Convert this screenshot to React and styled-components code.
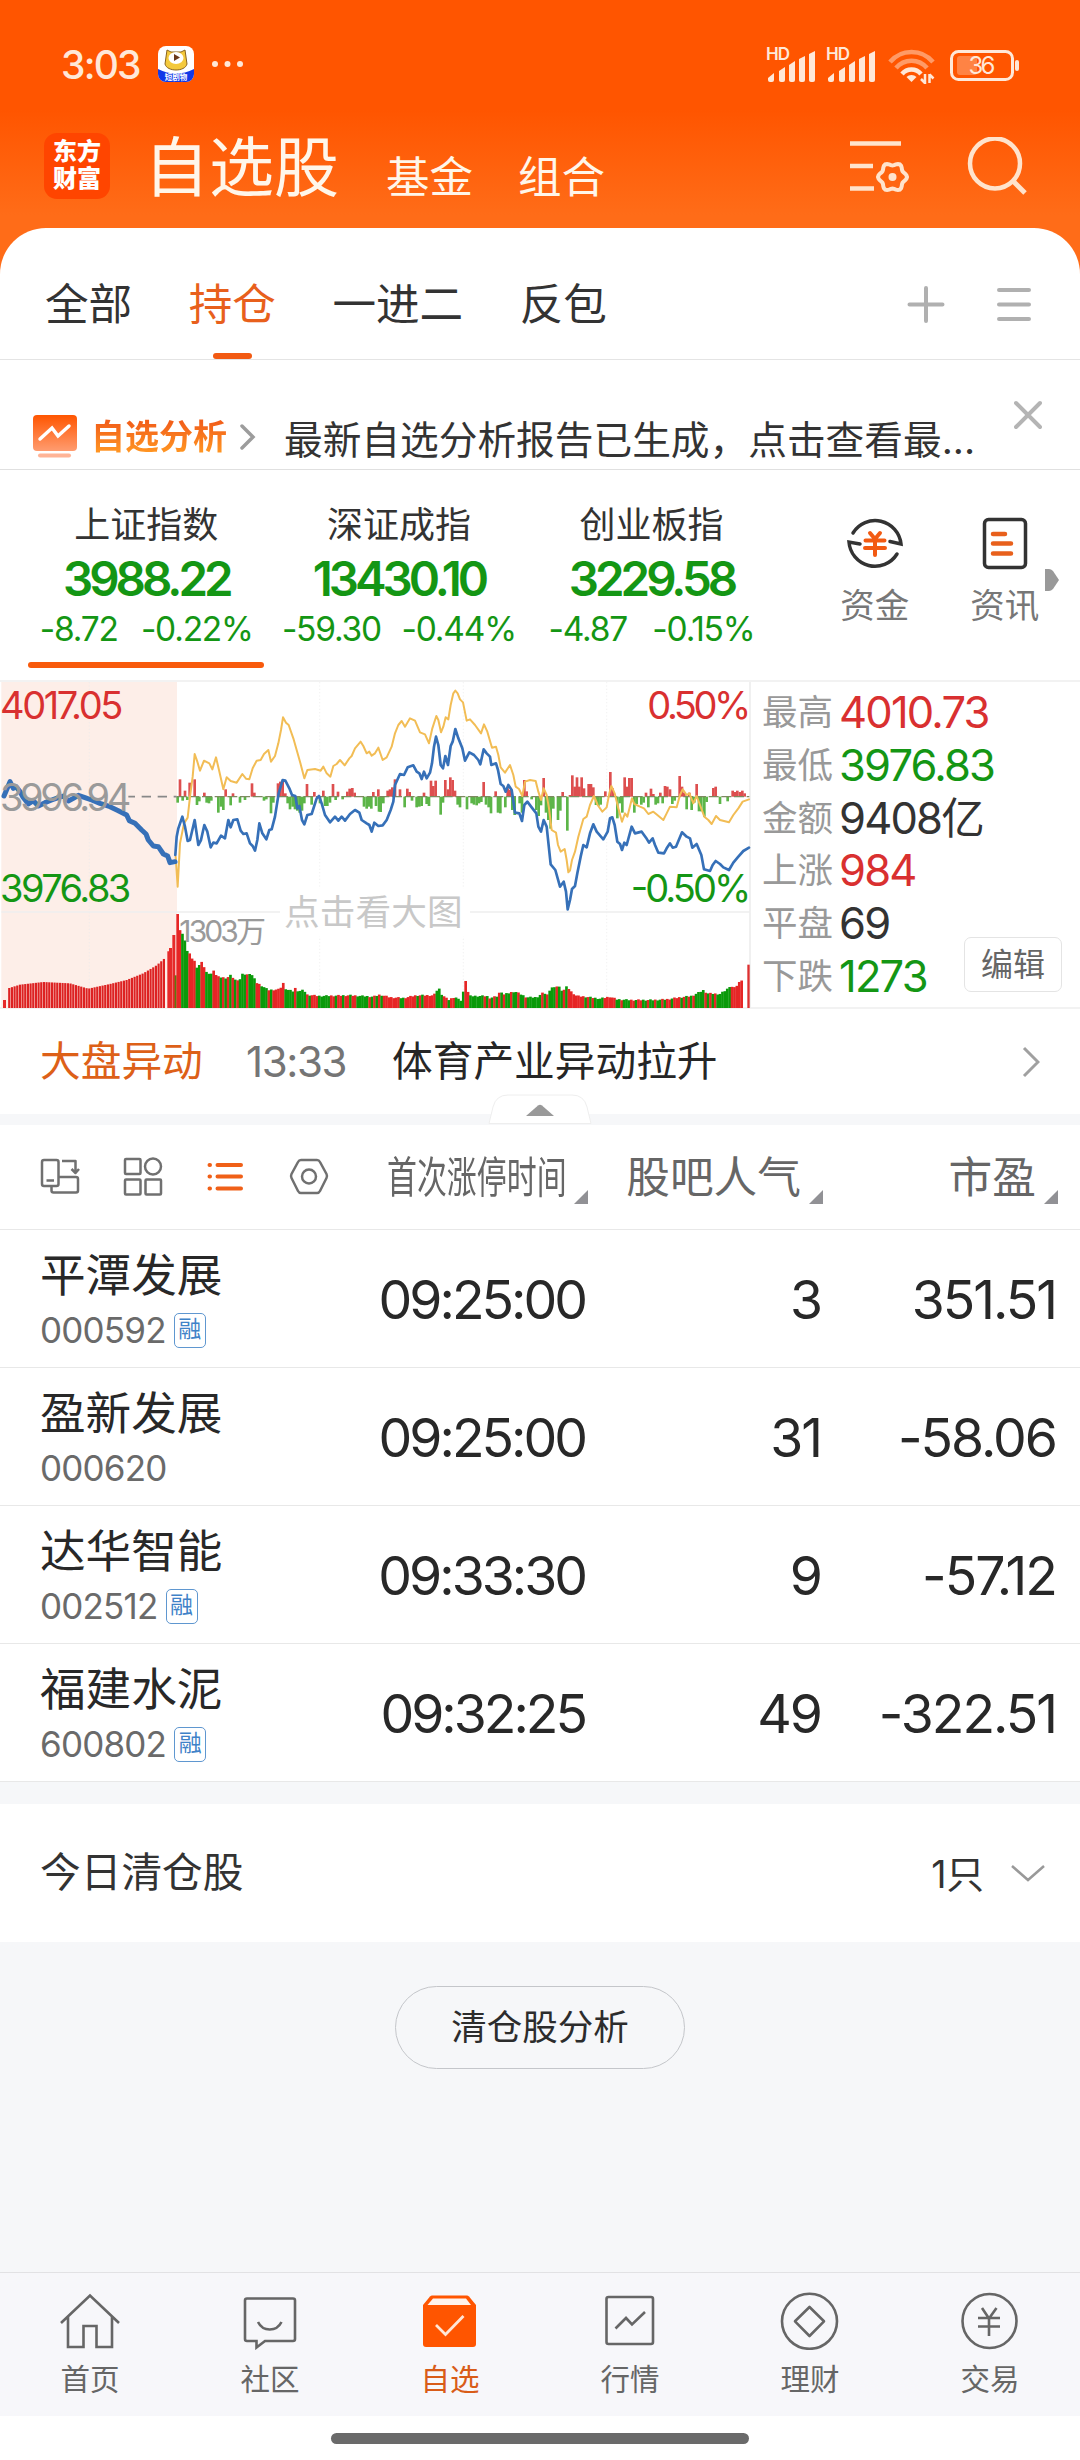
import React from 'react';
import styled, { createGlobalStyle } from 'styled-components';

const ORANGE = '#e8601c';
const RED = '#d93030';
const GREEN = '#149614';

const GlobalStyle = createGlobalStyle`
  * {
    box-sizing: border-box;
  }
  body {
    margin: 0;
    background: #ffffff;
    font-family: Inter, "Noto Sans CJK SC", sans-serif;
    color: #333333;
  }
  svg {
    display: block;
    flex: none;
  }
`;

const Screen = styled.div`
  width: 1080px;
  height: 2460px;
  display: flex;
  flex-direction: column;
  overflow: hidden;
  white-space: nowrap;
  background: linear-gradient(#ff5500 110px, #ff6c18 215px, #ff6c18 300px, #ffffff 300px);
`;

/* ---------- status bar ---------- */

const StatusBar = styled.div`
  height: 128px;
  padding: 0 59px 0 61px;
  display: flex;
  align-items: center;
  color: #ffe8d8;
`;

const Clock = styled.div`
  width: 97px;
  font-size: 39px;
  font-weight: 500;
  letter-spacing: -1.8px;
`;

const StatusIcons = styled.div`
  margin-left: auto;
  margin-top: -3px;
  display: flex;
`;

const Signal = () => (
  <svg width="60" height="40" viewBox="0 0 60 40" fill="#ffe8d8">
    <text x="0" y="18" fontSize="17" fontWeight="600" textLength="24">HD</text>
    <path d="M2 38v-2l6-5v7a2 2 0 0 1-2 2H4a2 2 0 0 1-2-2z" />
    <path d="M13 38V29l6-4v13a2 2 0 0 1-2 2h-2a2 2 0 0 1-2-2z" />
    <path d="M23 38V23l6-4v19a2 2 0 0 1-2 2h-2a2 2 0 0 1-2-2z" />
    <path d="M33 38V17l6-3v24a2 2 0 0 1-2 2h-2a2 2 0 0 1-2-2z" />
    <path d="M43 38V12l6-3v29a2 2 0 0 1-2 2h-2a2 2 0 0 1-2-2z" />
  </svg>
);

const Wifi = () => (
  <svg width="64" height="42" viewBox="0 0 64 42" fill="none" strokeWidth="4.5">
    <path d="M4 20a28 28 0 0 1 43 0" stroke="#ff9a66" />
    <path d="M10 26a20 20 0 0 1 31 0" stroke="#ff9a66" />
    <path d="M16 32a12.5 12.5 0 0 1 19 0" stroke="#ffe8d8" />
    <path d="M25.5 40l-5-5a7 7 0 0 1 10 0z" fill="#ffe8d8" />
    <path d="M39 32v10M39 41l-4-4M43.5 41V32M43.5 32.5l4 4" stroke="#ffe8d8" strokeWidth="2.5" />
  </svg>
);

const Battery = () => (
  <svg width="71" height="40" viewBox="0 0 71 40">
    <rect x="1.5" y="9.5" width="61" height="28" rx="7" fill="none" stroke="#ffe8d8" strokeWidth="3" />
    <rect x="7" y="14" width="20" height="19" rx="3" fill="#ff8344" />
    <rect x="65" y="18" width="4" height="11" rx="2" fill="#ffe8d8" />
    <text x="32" y="32" fontSize="24" textLength="27" textAnchor="middle" fill="#ffe8d8">36</text>
  </svg>
);

const StatusApp = () => (
  <svg width="86" height="38" viewBox="0 0 86 38">
    <clipPath id="app"><rect y="1" width="36" height="36" rx="8" /></clipPath>
    <g clipPath="url(#app)">
      <rect width="36" height="38" fill="#ffffff" />
      <path d="M0 24q18 9 36 0v14H0z" fill="#1238e8" />
      <path d="M9 5l4 2h10l4-2 1 7 1 7c-2 8-20 8-22 0l1-7z" fill="#f4c93c" stroke="#8a6420" strokeWidth="1" />
      <ellipse cx="18" cy="13" rx="7.5" ry="6" fill="#ffffff" />
      <path d="M16 9l6 3.5-6 3.5z" fill="#6b3a1c" />
      <text x="18" y="35" fontSize="7.5" fontWeight="700" textAnchor="middle" fill="#ffffff">短剧物</text>
    </g>
    <g fill="#ffe8d8">
      <circle cx="57" cy="19" r="3" />
      <circle cx="69.5" cy="19" r="3" />
      <circle cx="82" cy="19" r="3" />
    </g>
  </svg>
);

/* ---------- title bar ---------- */

const TitleBar = styled.div`
  height: 100px;
  padding: 5px 53px 29px 44px;
  display: flex;
  align-items: flex-end;
  color: #fff6ea;
`;

const Logo = styled.div`
  width: 66px;
  height: 66px;
  margin-right: 34px;
  border-radius: 13px;
  background: #ff4500;
  color: #ffffff;
  font-size: 24px;
  font-weight: 900;
  line-height: 27px;
  padding: 5px 9px;
  white-space: normal;
`;

const Title = styled.div`
  font-size: ${props => (props.$big ? 65 : 43.5)}px;
  line-height: 62px;
  height: ${props => (props.$big ? 62 : 53)}px;
  margin-right: ${props => (props.$big ? 47 : 45)}px;
`;

const TitleIcons = styled.div`
  margin-left: auto;
  display: flex;
  gap: 56px;
`;

const gearPath = Array.from({ length: 48 }, (_, i) => {
  const a = (i * Math.PI) / 24;
  const r = 13 + 1.5 * Math.cos(6 * a);
  return `${i ? 'L' : 'M'}${(44.5 + r * Math.cos(a)).toFixed(1)} ${(40 + r * Math.sin(a)).toFixed(1)}`;
}).join('') + 'Z';

const FilterIcon = () => (
  <svg width="62" height="62" viewBox="1 0 62 62" fill="none" stroke="#ffe3cc" strokeWidth="4.5">
    <path d="M2 6.5h51M2 29h23M2 51.5h24" />
    <path d={gearPath} strokeWidth="4" />
    <circle cx="44.5" cy="40" r="4" fill="#ffe3cc" stroke="none" />
  </svg>
);

const SearchIcon = () => (
  <svg width="60" height="62" viewBox="0 0 60 62" fill="none" stroke="#ffe3cc" strokeWidth="4.5">
    <circle cx="28" cy="26.5" r="25" />
    <path d="M45 43l13 13" strokeWidth="5" />
  </svg>
);

/* ---------- group tabs ---------- */

const Panel = styled.div`
  flex: 1;
  display: flex;
  flex-direction: column;
  background: #ffffff;
  border-radius: 46px 46px 0 0;
`;

const Tabs = styled.div`
  height: 132px;
  padding: 0 47px 0 45px;
  display: flex;
  gap: 56.5px;
  border-bottom: 1px solid #e4e4e4;
`;

const Tab = styled.div`
  height: 131px;
  display: flex;
  flex-direction: column;
  align-items: center;
  justify-content: flex-end;
  font-size: 43.6px;
  line-height: 60px;
  color: ${props => (props.$active ? ORANGE : '#333333')};

  &::after {
    content: '';
    width: 39px;
    height: 6px;
    margin-top: 18px;
    border-radius: 3px;
    background: ${props => (props.$active ? '#f25a12' : 'transparent')};
  }
`;

const TabIcons = styled.div`
  margin-left: auto;
  padding-top: 57px;
  display: flex;
  gap: 48px;
`;

/* ---------- analysis notice ---------- */

const Notice = styled.div`
  height: 110px;
  padding: 44px 38px 0 33px;
  display: flex;
  align-items: center;
  border-bottom: 1px solid #e0e0e0;
`;

const NoticeTag = styled.div`
  margin: 0 13px 0 14px;
  font-size: 34px;
  line-height: 48px;
  font-weight: 700;
  color: transparent;
  background: linear-gradient(#f2601a 20%, #ff9422 80%);
  background-clip: text;
`;

const NoticeText = styled.div`
  margin: 6px auto 0 28px;
  font-size: 38.7px;
  line-height: 50px;
`;

const CloseIcon = () => (
  <svg width="28" height="100" viewBox="0 0 28 100" stroke="#b4b4b4" strokeWidth="4" strokeLinecap="round">
    <path d="M2 16l24 24M26 16L2 40" />
  </svg>
);

/* ---------- indexes ---------- */

const Indexes = styled.div`
  height: 210px;
  padding-left: 20px;
  display: flex;
`;

const Index = styled.div`
  width: 252.6px;
  padding-top: 32px;
  display: flex;
  flex-direction: column;
  align-items: center;
`;

const IndexName = styled.div`
  font-size: 36px;
  line-height: 46px;
`;

const IndexValue = styled.div`
  font-size: 47.5px;
  font-weight: 600;
  line-height: 61px;
  letter-spacing: -4px;
  color: ${GREEN};
`;

const IndexChange = styled.div`
  width: ${props => props.$width}px;
  display: flex;
  justify-content: space-between;
  font-size: 33.5px;
  line-height: 40px;
  letter-spacing: -1.2px;
  color: ${GREEN};
`;

const IndexBar = styled.div`
  width: 236px;
  height: 6px;
  margin-top: 13px;
  border-radius: 3px;
  background: #f85a0c;
`;

const Shortcuts = styled.div`
  margin-left: 32px;
  display: flex;
`;

const Shortcut = styled.div`
  width: 130px;
  padding-top: 42px;
  display: flex;
  flex-direction: column;
  align-items: center;
  font-size: 34.5px;
  line-height: 46px;
  color: #777777;

  svg {
    margin-bottom: 9px;
  }
`;

const MoreArrow = styled.svg`
  margin-left: -25px;
`;

/* ---------- chart ---------- */

const ChartRow = styled.div`
  height: 329px;
  display: flex;
  border-top: 2px solid #f2f2f2;
  border-bottom: 2px solid #f2f2f2;
`;

const preMarket = '12,378 30,335 40,355 48,350 60,365 68,380 85,402 100,392 115,408 135,398 155,390 175,383 190,378 205,393 220,385 235,376 255,383 275,390 300,400 330,410 355,422 380,435 388,452 405,460 425,480 438,492 445,510 460,528 475,530 490,552 503,558 510,578 525,575';

const priceLine = '526,555 530,500 535,475 547,440 555,470 563,513 570,510 584,450 595,525 603,510 613,465 622,485 632,532 640,518 650,520 663,497 675,505 685,450 692,472 700,450 712,448 722,482 730,492 740,490 750,520 758,528 765,542 772,510 778,460 787,490 799,508 808,480 815,478 825,440 836,370 848,330 856,332 868,355 876,375 886,378 892,415 898,408 906,450 913,463 922,435 935,432 950,385 957,378 965,400 975,435 990,457 1005,440 1015,452 1025,440 1035,452 1050,432 1065,420 1078,428 1085,450 1100,460 1108,465 1115,485 1123,458 1135,468 1148,466 1160,450 1172,420 1180,395 1185,345 1200,312 1212,315 1223,292 1240,286 1250,305 1258,310 1265,327 1272,305 1280,325 1290,308 1296,280 1302,230 1308,200 1315,225 1322,285 1329,295 1336,258 1344,285 1352,228 1358,215 1366,177 1375,205 1387,235 1395,272 1408,247 1422,255 1435,270 1441,283 1451,238 1460,250 1470,260 1474,285 1488,280 1494,300 1502,342 1510,348 1517,365 1525,345 1535,360 1545,428 1558,430 1566,453 1573,405 1582,395 1595,412 1609,430 1615,470 1623,485 1631,450 1640,470 1652,583 1666,600 1680,650 1691,635 1698,665 1703,718 1710,690 1716,657 1725,648 1732,610 1742,560 1750,525 1760,532 1770,490 1780,463 1790,485 1810,508 1823,485 1830,445 1837,442 1844,465 1852,515 1860,522 1866,540 1873,518 1880,525 1895,470 1905,490 1925,485 1938,503 1947,518 1958,505 1965,525 1975,548 1992,550 2000,535 2010,520 2018,533 2028,530 2046,487 2060,500 2070,505 2077,533 2090,522 2104,555 2112,598 2130,603 2138,585 2147,573 2160,582 2170,592 2187,600 2200,578 2215,560 2230,543 2247,533';

const averageLine = '527,560 533,650 540,520 552,460 563,443 570,380 578,320 584,252 592,275 600,302 612,272 628,280 637,298 648,262 657,300 670,358 680,322 692,333 710,338 727,312 738,326 748,328 758,295 770,272 782,270 792,252 805,240 813,275 825,258 835,220 843,180 849,142 858,158 866,165 880,205 890,240 900,275 913,325 922,300 945,297 962,302 970,290 980,310 991,320 1000,288 1010,282 1020,270 1034,286 1048,265 1055,258 1065,235 1082,215 1090,228 1100,250 1108,245 1115,257 1125,250 1135,233 1148,270 1160,262 1175,230 1185,190 1195,165 1205,153 1215,170 1230,145 1245,152 1260,187 1275,193 1287,220 1297,175 1309,138 1315,150 1323,187 1330,170 1337,142 1345,148 1352,105 1360,70 1366,62 1373,70 1380,88 1389,97 1400,152 1410,148 1425,165 1443,190 1452,163 1462,185 1476,233 1488,230 1495,255 1502,292 1515,308 1530,285 1540,315 1547,350 1557,357 1567,378 1575,335 1590,330 1607,333 1615,365 1623,390 1631,355 1640,375 1647,415 1655,480 1668,488 1674,525 1682,545 1694,537 1700,570 1705,607 1710,602 1716,570 1725,545 1735,500 1750,447 1760,440 1770,405 1782,378 1793,405 1807,425 1820,412 1828,370 1834,348 1844,370 1855,415 1866,455 1875,430 1882,440 1896,385 1903,402 1920,410 1932,415 1945,432 1960,425 1972,435 1990,450 2000,430 2010,410 2030,412 2040,375 2048,358 2060,375 2068,370 2080,400 2090,378 2100,405 2113,440 2125,450 2135,462 2148,438 2160,450 2187,457 2200,435 2215,415 2228,395 2247,388';

// net flow around the previous close: [x, height], negative hangs below
const flow = [
  [540, 52], [555, 18], [569, 42], [584, 52], [613, 12], [677, 22], [699, 10], [756, 40], [763, 12], [834, 40],
  [841, 45], [848, 48], [856, 10], [921, 38], [943, 14], [970, 18], [999, 38], [1014, 15], [1042, 15], [1049, 24],
  [1057, 26], [1064, 12], [533, -18], [548, -12], [562, -10], [591, -25], [598, -14], [620, -18], [627, -20],
  [634, -12], [655, -48], [663, -30], [670, -40], [692, -26], [720, -18], [735, -10], [792, -12], [799, -8],
  [813, -50], [820, -18], [863, -20], [870, -38], [878, -30], [885, -38], [892, -42], [899, -48], [906, -42],
  [913, -20], [935, -24], [960, -20], [975, -28], [982, -28], [990, -18], [1007, -10], [1028, -8], [1092, -30],
  [1100, -36], [1107, -30], [1114, -36], [1128, -28], [1137, -45],
  [1120, 14], [1135, 22], [1163, 18], [1170, 22], [1177, 28], [1185, 52], [1200, 22], [1222, 24], [1229, 14],
  [1272, 12], [1293, 48], [1300, 32], [1307, 48], [1336, 50], [1344, 22], [1351, 58], [1358, 50], [1365, 18],
  [1451, 44], [1487, 16], [1523, 25], [1530, 20], [1573, 50], [1580, 16], [1631, 56], [1688, 14], [1710, 5],
  [1717, 64], [1724, 30], [1731, 58], [1745, 58], [1738, 30], [1752, 25], [1766, 38], [1773, 38], [1780, 28],
  [1816, 16], [1831, 74], [1838, 25], [1874, 58], [1881, 30], [1888, 56], [1895, 56], [1938, 12], [1953, 24],
  [1960, 8], [1981, 12], [1995, 32], [2002, 30], [2010, 22], [2039, 62], [2046, 30], [2053, 12], [2068, 12],
  [2090, 38], [2140, 26], [2147, 30], [2198, 18], [2205, 14], [2212, 18], [2220, 14], [2227, 18], [2234, 10],
  [1142, -46], [1150, -20], [1214, -32], [1236, -12], [1250, -32], [1258, -30], [1265, -28], [1280, -22],
  [1287, -28], [1322, -54], [1329, -18], [1373, -24], [1380, -32], [1401, -38], [1415, -20], [1422, -24],
  [1430, -26], [1437, -20], [1444, -16], [1458, -24], [1466, -32], [1473, -50], [1494, -48], [1501, -50],
  [1516, -32], [1537, -40], [1544, -55], [1559, -20], [1566, -48], [1595, -8], [1609, -40], [1616, -58],
  [1623, -26], [1638, -48], [1645, -70], [1652, -96], [1660, -36], [1674, -70], [1681, -42], [1702, -102],
  [1788, -25], [1795, -28], [1802, -24], [1852, -65], [1860, -20], [1867, -48], [1903, -48], [1910, -22],
  [1924, -24], [1931, -18], [1945, -32], [1967, -24], [1974, -20], [1988, -20], [2017, -22], [2024, -12],
  [2060, -38], [2075, -40], [2083, -18], [2097, -44], [2104, -44], [2113, -60], [2120, -16], [2160, -22], [2183, -14],
];

const preVolume = [[28, 60], [60, 70], [130, 78], [210, 74], [265, 58], [330, 72], [380, 84], [430, 104], [470, 128], [493, 148]];

const volume = [
  [533, 284], [541, 228], [548, 220], [556, 200], [563, 164], [570, 166], [577, 146], [585, 138], [592, 118],
  [606, 142], [613, 120], [620, 105], [634, 102], [642, 116], [650, 94], [680, 90], [692, 98], [706, 84],
  [720, 86], [728, 102], [742, 100], [749, 104], [757, 98], [770, 76], [790, 64], [805, 54], [840, 56], [849, 76],
  [858, 56], [880, 50], [885, 60], [895, 50], [912, 54], [920, 40], [957, 36], [1050, 38], [1120, 34], [1140, 40],
  [1170, 32], [1210, 30], [1250, 38], [1300, 38], [1308, 45], [1315, 66], [1322, 44], [1345, 24], [1365, 34],
  [1380, 22], [1388, 24], [1394, 104], [1401, 55], [1410, 36], [1460, 36], [1470, 30], [1495, 36], [1501, 55],
  [1510, 40], [1544, 50], [1565, 40], [1580, 32], [1610, 32], [1630, 46], [1645, 38], [1652, 66], [1660, 58],
  [1674, 68], [1688, 50], [1702, 66], [1710, 52], [1730, 36], [1755, 34], [1800, 28], [1830, 34], [1850, 26],
  [1890, 24], [1960, 24], [2000, 26], [2040, 32], [2075, 36], [2112, 54], [2120, 44], [2160, 42], [2180, 55],
  [2190, 66], [2205, 60], [2220, 80], [2229, 88],
];

// colour runs of the volume bars: [last x, repeating pattern]
const runs = [
  [545, 'R'], [566, 'G'], [590, 'R'], [602, 'G'], [616, 'R'], [638, 'G'], [650, 'R'], [720, 'GR'], [735, 'G'],
  [742, 'R'], [768, 'G'], [780, 'R'], [806, 'G'], [815, 'RG'], [856, 'R'], [880, 'G'], [888, 'R'], [918, 'G'],
  [930, 'RG'], [957, 'R'], [990, 'G'], [1066, 'GRR'], [1095, 'G'], [1145, 'RG'], [1200, 'R'], [1216, 'G'],
  [1246, 'R'], [1280, 'GR'], [1308, 'R'], [1330, 'G'], [1370, 'RRG'], [1396, 'G'], [1408, 'R'], [1445, 'G'],
  [1500, 'RG'], [1580, 'GRG'], [1620, 'G'], [1650, 'RG'], [1680, 'GGR'], [1705, 'GR'], [1752, 'R'], [1782, 'GR'],
  [1812, 'G'], [1840, 'R'], [1885, 'GGR'], [1925, 'RRG'], [1990, 'GRG'], [2035, 'RRG'], [2095, 'GR'], [2112, 'G'],
  [2150, 'RG'], [2193, 'G'], [2240, 'R'],
];

const heightAt = (points, x) => {
  const i = points.findIndex(point => point[0] >= x);
  if (i < 0) return points[points.length - 1][1];
  if (i === 0) return points[0][1];
  const [x0, y0] = points[i - 1];
  const [x1, y1] = points[i];
  return y0 + ((y1 - y0) * (x - x0)) / (x1 - x0);
};

const preBars = Array.from({ length: 59 }, (_, i) => 28 + i * 8);
const volumeBars = Array.from({ length: 236 }, (_, i) => {
  const x = 533 + i * 7.2;
  const pattern = runs.find(run => run[0] >= x)[1];
  return { x, h: heightAt(volume, x) + ((i * 7) % 5) - 2, up: pattern[i % pattern.length] === 'R' };
});

const MinuteChart = () => (
  <svg width="752" height="326" viewBox="0 36 2256 978" fontSize="114">
    <rect x="4" y="36" width="527" height="978" fill="#fdeee8" />
    <path d="M268 36v978M959 36v978M1390 36v978M1820 36v978" stroke="#ececec" strokeWidth="2" strokeDasharray="4 6" />
    <path d="M4 726h836M1404 726h846M2250 30v984" stroke="#eeeeee" strokeWidth="5" />
    <rect x="940" y="655" width="40" height="145" fill="#ffffff" />
    <rect x="1370" y="655" width="40" height="145" fill="#ffffff" />
    {flow.map(([x, h]) => (
      <rect key={x} x={x - 4} y={h > 0 ? 380 - h : 380} width="8" height={Math.abs(h)} fill={h > 0 ? '#dd4f4f' : '#5cb548'} />
    ))}
    <path d="M385 380H530" stroke="#888888" strokeWidth="5" strokeDasharray="28 20" strokeDashoffset="-40" />
    <path d="M530 380H2248" stroke="#7d8a60" strokeWidth="4" strokeDasharray="30 8" />
    <rect x="9" y="990" width="9" height="24" fill="#e62a2a" />
    {preBars.map(x => (
      <rect key={x} x={x - 3.5} y={1014 - heightAt(preVolume, x)} width="6.5" height={heightAt(preVolume, x)} fill="#dd2222" />
    ))}
    <path d="M502 1014V844h9v170zM507 1014V834h9v180zM517 1014V795h9v219z" fill="#e62a2a" />
    <rect x="524" y="916" width="6" height="98" fill="#5a7a10" />
    {volumeBars.map(({ x, h, up }) => (
      <rect key={x} x={x - 4} y={1014 - h} width="8" height={h} fill={up ? '#e62626' : '#0a9a0a'} />
    ))}
    <rect x="2242" y="884" width="7" height="130" fill="#dd3030" />
    <g fill="none" strokeLinejoin="round" strokeLinecap="round">
      <polyline points={averageLine} stroke="#f2bd55" strokeWidth="6" />
      <polyline points={preMarket} stroke="#3670b8" strokeWidth="15" />
      <polyline points={priceLine} stroke="#3670b8" strokeWidth="8" />
    </g>
    <text x="0" y="147" fill={RED} textLength="370">4017.05</text>
    <text x="0" y="422" fill="#9a9a9a" textLength="394">3996.94</text>
    <text x="0" y="696" fill={GREEN} textLength="394">3976.83</text>
    <text x="1942" y="147" fill={RED} textLength="312">0.50%</text>
    <text x="1892" y="696" fill={GREEN} textLength="362">-0.50%</text>
    <text x="538" y="815" fill="#9a9a9a" fontSize="90" textLength="260">1303万</text>
    <text x="852" y="766" fill="#c8c8c8" fontSize="107" textLength="536">点击看大图</text>
  </svg>
);

const Stats = styled.div`
  width: 328px;
  padding: 4px 16px 0 10px;
  display: grid;
  grid-template-columns: 77px 125px 1fr;
  grid-auto-rows: 52.7px;
  align-items: center;
`;

const StatLabel = styled.div`
  margin-top: -5px;
  font-size: 35.5px;
  color: #999999;
`;

const StatValue = styled.div`
  font-size: 43.5px;
  line-height: 52px;
  letter-spacing: -1.8px;
  color: ${props => props.$color};
  ${props => (props.$short ? '' : 'grid-column: 2 / 4;')}
`;

const EditButton = styled.button`
  width: 98px;
  height: 55px;
  margin: -22px 0 0;
  padding: 0;
  font: 32px/50px Inter, "Noto Sans CJK SC", sans-serif;
  color: #666666;
  background: #ffffff;
  border: 1px solid #e4e4e4;
  border-radius: 7px;
`;

/* ---------- market movement ---------- */

const Movement = styled.div`
  height: 105px;
  padding: 0 40px;
  display: flex;
  align-items: center;
  font-size: 40.7px;
  line-height: 60px;
  color: #262626;
`;

const MovementTag = styled.div`
  width: 206px;
  color: #dd6018;
`;

const MovementTime = styled.div`
  width: 146px;
  font-size: 42px;
  letter-spacing: -1.4px;
  color: #757575;
`;

const MovementTitle = styled.div`
  flex: 1;
`;

const Band = styled.div`
  height: ${props => props.$height}px;
  background: #f6f7f9;
`;

const Handle = styled.svg`
  margin: -20px auto 0;
`;

/* ---------- stock table ---------- */

const TableHead = styled.div`
  height: 105px;
  padding-right: 22px;
  display: grid;
  grid-template-columns: 353px 235px 235px 235px;
  align-items: center;
  border-bottom: 1px solid #e8e8e8;
`;

const ViewIcons = styled.div`
  padding-left: 38px;
  display: flex;
  gap: 39px;
`;

const HeadCell = styled.div`
  padding-top: 2px;
  display: flex;
  justify-content: flex-end;
  align-items: flex-end;
  font-size: 43.7px;
  line-height: 64px;
  color: #666666;

  &::after {
    content: '';
    margin: 0 0 6px 8px;
    border-left: 14px solid transparent;
    border-bottom: 14px solid #919195;
  }
`;

const Narrow = styled.span`
  width: 179px;
  height: 64px;
  display: flex;

  span {
    transform: scaleX(0.685);
    transform-origin: left;
  }
`;

const StockRow = styled.div`
  height: 138px;
  padding-right: 22px;
  display: grid;
  grid-template-columns: 353px 235px 235px 235px;
  align-items: center;
  border-bottom: 1px solid #e8e8e8;
`;

const StockCell = styled.div`
  padding: 2px ${props => (props.$time ? 3 : 2)}px 0 0;
  text-align: right;
  font-size: 53.5px;
  letter-spacing: ${props => (props.$time ? -3 : -2)}px;
  color: #282828;
`;

const Stock = styled.div`
  padding: 3px 0 0 40px;
`;

const StockName = styled.div`
  font-size: 45.6px;
  line-height: 60px;
  color: #282828;
`;

const StockCode = styled.div`
  display: flex;
  align-items: center;
  gap: 8px;
  font-size: 35px;
  line-height: 48px;
  letter-spacing: -0.8px;
  color: #6a6a6a;
`;

const MarginBadge = styled.span`
  width: 32px;
  height: 35px;
  font-size: 23px;
  line-height: 31px;
  text-align: center;
  letter-spacing: 0;
  color: #3f82c8;
  border: 1.5px solid #5f97d0;
  border-radius: 5px;
`;

/* ---------- cleared positions ---------- */

const Cleared = styled.div`
  height: 138px;
  padding: 0 35px 0 40px;
  display: flex;
  align-items: center;
  font-size: 40.7px;
`;

const ClearedLabel = styled.div`
  margin-top: -7px;
`;

const ClearedCount = styled.div`
  margin: -4px 27px 0 auto;
  font-size: 37.5px;
`;

const Footer = styled.div`
  flex: 1;
  padding-top: 44px;
  background: #f6f7f9;
`;

const AnalysisButton = styled.button`
  display: block;
  width: 290px;
  height: 83px;
  margin: 0 auto;
  padding: 0 0 6px;
  font: 35.5px Inter, "Noto Sans CJK SC", sans-serif;
  color: #2c2c2c;
  background: transparent;
  border: 1px solid #c4c6ca;
  border-radius: 42px;
`;

/* ---------- bottom navigation ---------- */

const TabBar = styled.div`
  height: 144px;
  display: grid;
  grid-template-columns: repeat(6, 180px);
  background: #f7f7fa;
  border-top: 1px solid #e2e2e4;
`;

const TabItem = styled.div`
  padding-top: 17px;
  display: flex;
  flex-direction: column;
  align-items: center;
  font-size: 29.5px;
  line-height: 42px;
  gap: 8px;
  color: ${props => (props.$active ? '#d95c18' : '#666666')};
`;

const HomeArea = styled.div`
  height: 44px;
  padding-top: 17px;
  background: #ffffff;
`;

const HomeIndicator = styled.div`
  width: 418px;
  height: 11px;
  margin: 0 auto;
  border-radius: 6px;
  background: #6a6a6a;
`;

const NavIcon = ({ children }) => (
  <svg width="60" height="60" viewBox="0 0 60 60" fill="none" stroke="#666666" strokeWidth="2.6">
    {children}
  </svg>
);

const ViewIcon = ({ children, color = '#707070' }) => (
  <svg width="44" height="44" viewBox="0 0 44 44" fill="none" stroke={color} strokeWidth="2.5" strokeLinejoin="round">
    {children}
  </svg>
);

const navItems = [
  { label: '首页', icon: <path d="M1 33L30 5.5 59 33M8 27V57H23.5V36H36.5V57H52V27" /> },
  {
    label: '社区',
    icon: <path d="M7 8.5H53Q55 8.5 55 10.5V49Q55 51 53 51H25L16.5 57.5V51H7Q5 51 5 49V10.5Q5 8.5 7 8.5ZM18 32C23 42 36.5 42 41.5 32" />,
  },
  {
    label: '自选',
    active: true,
    icon: (
      <g stroke="none">
        <path d="M12 5.5H47Q48 5.5 49 6.5L56 15V54Q56 57 53 57H6Q3 57 3 54V15L10 6.5Q11 5.5 12 5.5Z" fill="#ff5500" />
        <path d="M13 8.5H46L51 15H7.5Z" fill="#fff3ec" />
        <path d="M16 35L25.5 44.5 43.5 26" fill="none" stroke="#ffe6d6" strokeWidth="2.8" />
      </g>
    ),
  },
  {
    label: '行情',
    icon: <g><rect x="6.5" y="7" width="46.5" height="47" rx="2" /><path d="M15.5 38.5L26 28 32 34.5 45 22" /></g>,
  },
  {
    label: '理财',
    icon: <g><circle cx="29.5" cy="31.3" r="27.5" /><path d="M29.5 17L44 31.3 29.5 46 15 31.3Z" strokeLinejoin="round" /></g>,
  },
  {
    label: '交易',
    icon: <g><circle cx="29.5" cy="31" r="27" /><path d="M22 18L29 28.5 36.5 18M29 28V46M18 28H40M18 36.5H40" /></g>,
  },
];

const indexes = [
  { name: '上证指数', value: '3988.22', change: '-8.72', percent: '-0.22%', width: 213, active: true },
  { name: '深证成指', value: '13430.10', change: '-59.30', percent: '-0.44%', width: 234 },
  { name: '创业板指', value: '3229.58', change: '-4.87', percent: '-0.15%', width: 206 },
];

const stats = [
  ['最高', '4010.73', RED],
  ['最低', '3976.83', GREEN],
  ['金额', '9408亿', '#333333'],
  ['上涨', '984', RED],
  ['平盘', '69', '#333333'],
  ['下跌', '1273', GREEN],
];

const stocks = [
  { name: '平潭发展', code: '000592', margin: true, cells: ['09:25:00', '3', '351.51'] },
  { name: '盈新发展', code: '000620', cells: ['09:25:00', '31', '-58.06'] },
  { name: '达华智能', code: '002512', margin: true, cells: ['09:33:30', '9', '-57.12'] },
  { name: '福建水泥', code: '600802', margin: true, cells: ['09:32:25', '49', '-322.51'] },
];

const App = () => (
  <Screen>
    <GlobalStyle />
    <StatusBar>
      <Clock>3:03</Clock>
      <StatusApp />
      <StatusIcons>
        <Signal />
        <Signal />
        <Wifi />
        <Battery />
      </StatusIcons>
    </StatusBar>
    <TitleBar>
      <Logo>东方财富</Logo>
      <Title $big>自选股</Title>
      <Title>基金</Title>
      <Title>组合</Title>
      <TitleIcons>
        <FilterIcon />
        <SearchIcon />
      </TitleIcons>
    </TitleBar>
    <Panel>
      <Tabs>
        <Tab>全部</Tab>
        <Tab $active>持仓</Tab>
        <Tab>一进二</Tab>
        <Tab>反包</Tab>
        <TabIcons>
          <svg width="40" height="40" viewBox="0 0 40 40" stroke="#b0b0b0" strokeWidth="4" strokeLinecap="round">
            <path d="M2.5 19.5h33M19 3v33" />
          </svg>
          <svg width="38" height="40" viewBox="0 0 38 40" stroke="#b0b0b0" strokeWidth="4" strokeLinecap="round">
            <path d="M4 5h30M4 19.5h30M4 34h30" />
          </svg>
        </TabIcons>
      </Tabs>
      <Notice>
        <svg width="44" height="44" viewBox="0 0 44 44">
          <linearGradient id="board" x2="0" y2="1">
            <stop stopColor="#ff5500" />
            <stop offset="1" stopColor="#ff9c70" />
          </linearGradient>
          <rect width="44" height="36" rx="4" fill="url(#board)" />
          <path d="M7 24L19 13 25 21 36 11" fill="none" stroke="#ffffff" strokeWidth="3.5" strokeLinecap="round" />
          <rect x="5" y="38.5" width="33" height="4" rx="2" fill="#ffb496" />
        </svg>
        <NoticeTag>自选分析</NoticeTag>
        <svg width="16" height="28" viewBox="0 0 16 28" fill="none" stroke="#9c9c9c" strokeWidth="3.5" strokeLinecap="round">
          <path d="M2 3L13 14 2 25" />
        </svg>
        <NoticeText>最新自选分析报告已生成，点击查看最...</NoticeText>
        <CloseIcon />
      </Notice>
      <Indexes>
        {indexes.map(({ name, value, change, percent, width, active }) => (
          <Index key={name}>
            <IndexName>{name}</IndexName>
            <IndexValue>{value}</IndexValue>
            <IndexChange $width={width}>
              <span>{change}</span>
              <span>{percent}</span>
            </IndexChange>
            {active && <IndexBar />}
          </Index>
        ))}
        <Shortcuts>
          <Shortcut>
            <svg width="60" height="62" viewBox="0 0 60 62" fill="none" stroke="#333333" strokeWidth="3.5">
              <path d="M8 21A26 26 0 0 1 56 32L45 29.5M52 42A26 26 0 0 1 4 30L15 32" strokeLinecap="round" />
              <path d="M25 21l5 6 5-6M20.5 28.5h19M20 36h20M30 27v16" stroke="#f25a12" strokeWidth="4" strokeLinecap="round" />
            </svg>
            资金
          </Shortcut>
          <Shortcut>
            <svg width="60" height="62" viewBox="0 0 60 62" fill="none" stroke="#333333" strokeWidth="3.5">
              <rect x="9.5" y="7.5" width="41" height="48" rx="4" />
              <path d="M18 22h12M18 31.5h18M18 41.5h18" stroke="#e8601c" strokeWidth="4.5" strokeLinecap="round" />
            </svg>
            资讯
          </Shortcut>
        </Shortcuts>
        <MoreArrow width="14" height="210" viewBox="0 0 14 210" fill="#999999">
          <path d="M0 99h4q2 0 4 2l6 9-6 9q-2 2-4 2H0z" />
        </MoreArrow>
      </Indexes>
      <ChartRow>
        <MinuteChart />
        <Stats>
          {stats.map(([label, value, color], i) => (
            <React.Fragment key={label}>
              <StatLabel>{label}</StatLabel>
              <StatValue $color={color} $short={i === 5}>{value}</StatValue>
            </React.Fragment>
          ))}
          <EditButton>编辑</EditButton>
        </Stats>
      </ChartRow>
      <Movement>
        <MovementTag>大盘异动</MovementTag>
        <MovementTime>13:33</MovementTime>
        <MovementTitle>体育产业异动拉升</MovementTitle>
        <svg width="18" height="32" viewBox="0 0 18 32" fill="none" stroke="#a0a0a0" strokeWidth="3">
          <path d="M2 2L16 16 2 30" />
        </svg>
      </Movement>
      <Band $height={11}>
        <Handle width="104" height="30" viewBox="0 0 104 30">
          <path d="M1 29.5L5 13Q8 1 20 1H84Q96 1 99 13L103 29.5Z" fill="#ffffff" stroke="#eeeeee" />
          <path d="M38 22L50 11.5q2-1.5 4 0L66 22z" fill="#999999" />
        </Handle>
      </Band>
      <TableHead>
        <ViewIcons>
          <ViewIcon>
            <rect x="4" y="5" width="16.5" height="26" rx="2" />
            <path d="M8.5 25.5H16M24 6H37.5V17M33.5 14L37.5 18 41 14M20.5 22H38Q40 22 40 24V35.5Q40 37.5 38 37.5H15.5Q13.5 37.5 13.5 35.5V31" />
          </ViewIcon>
          <ViewIcon>
            <rect x="4" y="4" width="15.5" height="15" rx="1" />
            <circle cx="32" cy="11.5" r="8" />
            <rect x="4" y="24.5" width="15.5" height="15" rx="1" />
            <rect x="24.5" y="24.5" width="15.5" height="15" rx="1" />
          </ViewIcon>
          <ViewIcon color="#f06018">
            <path d="M5.5 10H6M13.5 10H37M5.5 21.5H6M13.5 21.5H37M5.5 33.5H6M13.5 33.5H37" strokeWidth="4" strokeLinecap="round" />
          </ViewIcon>
          <ViewIcon>
            <path d="M14 5H30Q32 5 33 7L39.5 19Q40.5 21 39.5 23L33 36Q32 38 30 38H14Q12 38 11 36L4.5 23Q3.5 21 4.5 19L11 7Q12 5 14 5Z" />
            <circle cx="22" cy="21.5" r="7" />
          </ViewIcon>
        </ViewIcons>
        <HeadCell><Narrow><span>首次涨停时间</span></Narrow></HeadCell>
        <HeadCell>股吧人气</HeadCell>
        <HeadCell>市盈</HeadCell>
      </TableHead>
      {stocks.map(({ name, code, margin, cells }) => (
        <StockRow key={code}>
          <Stock>
            <StockName>{name}</StockName>
            <StockCode>
              {code}
              {margin && <MarginBadge>融</MarginBadge>}
            </StockCode>
          </Stock>
          {cells.map((cell, i) => <StockCell key={cell} $time={i === 0}>{cell}</StockCell>)}
        </StockRow>
      ))}
      <Band $height={22} />
      <Cleared>
        <ClearedLabel>今日清仓股</ClearedLabel>
        <ClearedCount>1只</ClearedCount>
        <svg width="34" height="18" viewBox="0 0 34 18" fill="none" stroke="#999999" strokeWidth="2.5">
          <path d="M1 2L17 16 33 2" />
        </svg>
      </Cleared>
      <Footer>
        <AnalysisButton>清仓股分析</AnalysisButton>
      </Footer>
      <TabBar>
        {navItems.map(({ label, icon, active }) => (
          <TabItem key={label} $active={active}>
            <NavIcon>{icon}</NavIcon>
            {label}
          </TabItem>
        ))}
      </TabBar>
      <HomeArea>
        <HomeIndicator />
      </HomeArea>
    </Panel>
  </Screen>
);

export default App;
